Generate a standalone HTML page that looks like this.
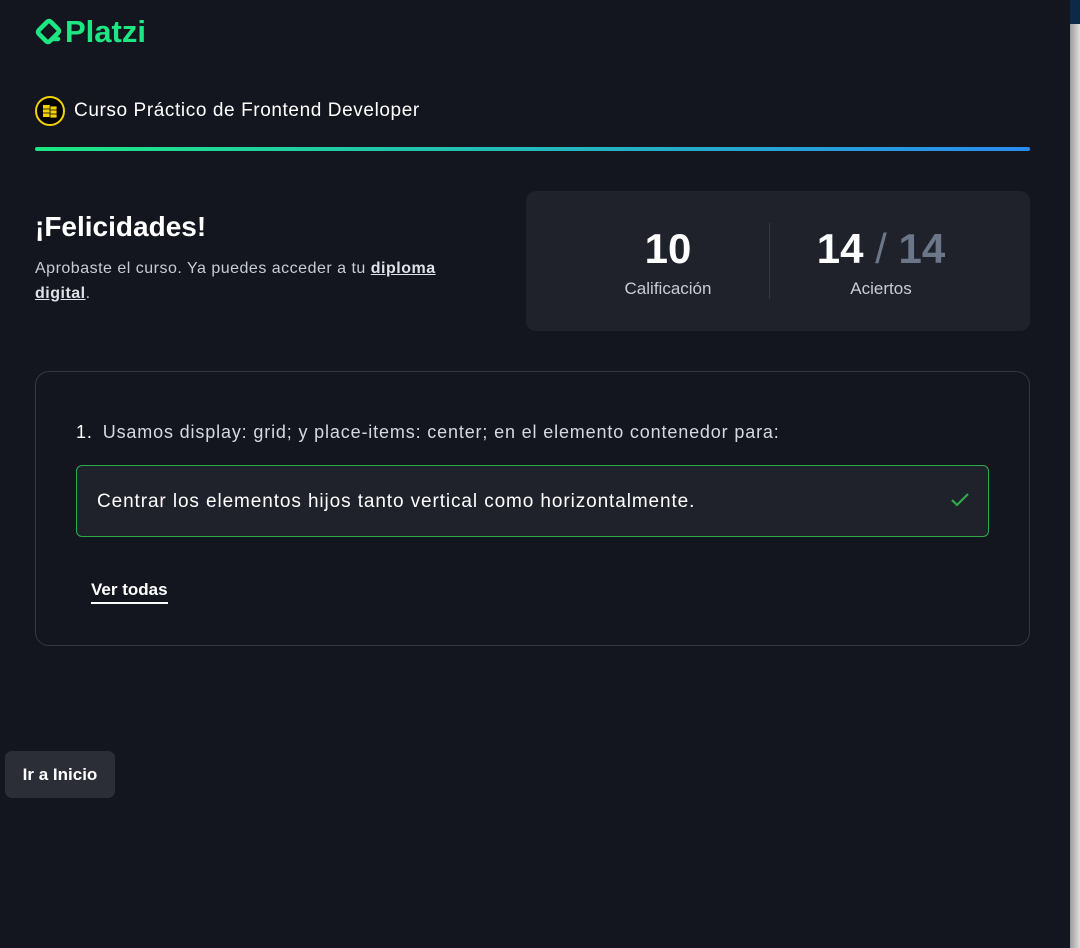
<!DOCTYPE html>
<html><head><meta charset="utf-8"><style>
*{box-sizing:border-box;margin:0;padding:0}
body{width:1080px;height:948px;background:#13161e;color:#fff;font-family:"Liberation Sans",sans-serif;position:relative;overflow:hidden}
.sb{position:absolute;right:0;top:0;width:10px;height:948px;background:linear-gradient(90deg,#9a9a9a,#e0e0e0)}
.sb:before{content:"";position:absolute;top:0;left:0;width:10px;height:24px;background:#0c2a48}
.logo{position:absolute;left:35px;top:14px;font-size:31px;font-weight:bold;color:#1ce783;display:flex;align-items:center;gap:2px}
.course{position:absolute;left:35px;top:96px;display:flex;align-items:center;gap:9px;font-size:19px;color:#fff;letter-spacing:.6px}
.ic{width:30px;height:30px;border:2px solid #f2d200;border-radius:50%;background:#000;display:flex;align-items:center;justify-content:center}
.bar{position:absolute;left:35px;top:147px;width:995px;height:4px;border-radius:2px;background:linear-gradient(90deg,#1ce783,#2a8cf0)}
h1{position:absolute;left:35px;top:211px;font-size:28px;font-weight:bold}
.sub{position:absolute;left:35px;top:256px;width:450px;font-size:16px;line-height:25px;color:#c8ccd4;letter-spacing:.5px}
.sub b{color:#dfe2e8;text-decoration:underline}
.stats{position:absolute;left:526px;top:191px;width:504px;height:140px;background:#1f222b;border-radius:10px}
.st{position:absolute;text-align:center;top:34px}
.st .n{font-size:42px;font-weight:bold;line-height:48px}
.st .l{font-size:17px;color:#c8ccd4;margin-top:6px}
.div{position:absolute;left:243px;top:32px;width:1px;height:76px;background:#333844}
.card{position:absolute;left:35px;top:371px;width:995px;height:275px;border:1px solid #333844;border-radius:14px}
.q{position:absolute;left:40px;top:50px;font-size:18px;color:#d6d9df;letter-spacing:.85px}
.q span{color:#fff;margin-right:10px}
.ans{position:absolute;left:40px;top:93px;width:913px;height:72px;border:1px solid #2eaa4a;border-radius:6px;background:#1f222b;font-size:19px;padding:25px 20px;letter-spacing:.9px}
.ans svg{position:absolute;right:18px;top:26px}
.vt{position:absolute;left:55px;top:208px;font-size:17px;font-weight:bold;border-bottom:2px solid #fff;padding-bottom:2px}
.btn{position:absolute;left:5px;top:751px;width:110px;height:47px;background:#2b2e37;border-radius:7px;font-size:17px;font-weight:bold;display:flex;align-items:center;justify-content:center}
</style></head><body>
<div class="sb"></div>
<div class="logo"><svg width="28" height="28" viewBox="0 0 28 28"><path d="M12 4 L4 12 Q2 14 4 16 L11 23 Q13 25 15 23 L18 20 M12 4 Q14 2 16 4 L23 11 Q25 13 23 15 L17 21 L23 21" fill="none" stroke="#1ce783" stroke-width="4.5" stroke-linejoin="round" stroke-linecap="round"/></svg>Platzi</div>
<div class="course"><div class="ic"><svg width="18" height="18" viewBox="0 0 18 18"><rect x="2" y="3" width="7" height="12" fill="#f2d200"/><rect x="9" y="4" width="7" height="12" fill="#f2d200" stroke="#000" stroke-width=".8"/><path d="M2 7h7M2 11h7M9 8h7M9 12h7" stroke="#000" stroke-width=".8"/></svg></div>Curso Práctico de Frontend Developer</div>
<div class="bar"></div>
<h1>¡Felicidades!</h1>
<div class="sub">Aprobaste el curso. Ya puedes acceder a tu <b>diploma digital</b>.</div>
<div class="stats">
<div class="st" style="left:82px;width:120px"><div class="n">10</div><div class="l">Calificación</div></div>
<div class="div"></div>
<div class="st" style="left:270px;width:170px"><div class="n">14 <span style="color:#6b7688;font-weight:normal">/</span> <span style="color:#6b7688">14</span></div><div class="l">Aciertos</div></div>
</div>
<div class="card">
<div class="q"><span>1.</span>Usamos display: grid; y place-items: center; en el elemento contenedor para:</div>
<div class="ans">Centrar los elementos hijos tanto vertical como horizontalmente.<svg width="20" height="16" viewBox="0 0 20 16"><path d="M2 8 L7 13 L18 2" fill="none" stroke="#2eaa4a" stroke-width="2.2"/></svg></div>
<div class="vt">Ver todas</div>
</div>
<div class="btn">Ir a Inicio</div>
</body></html>
